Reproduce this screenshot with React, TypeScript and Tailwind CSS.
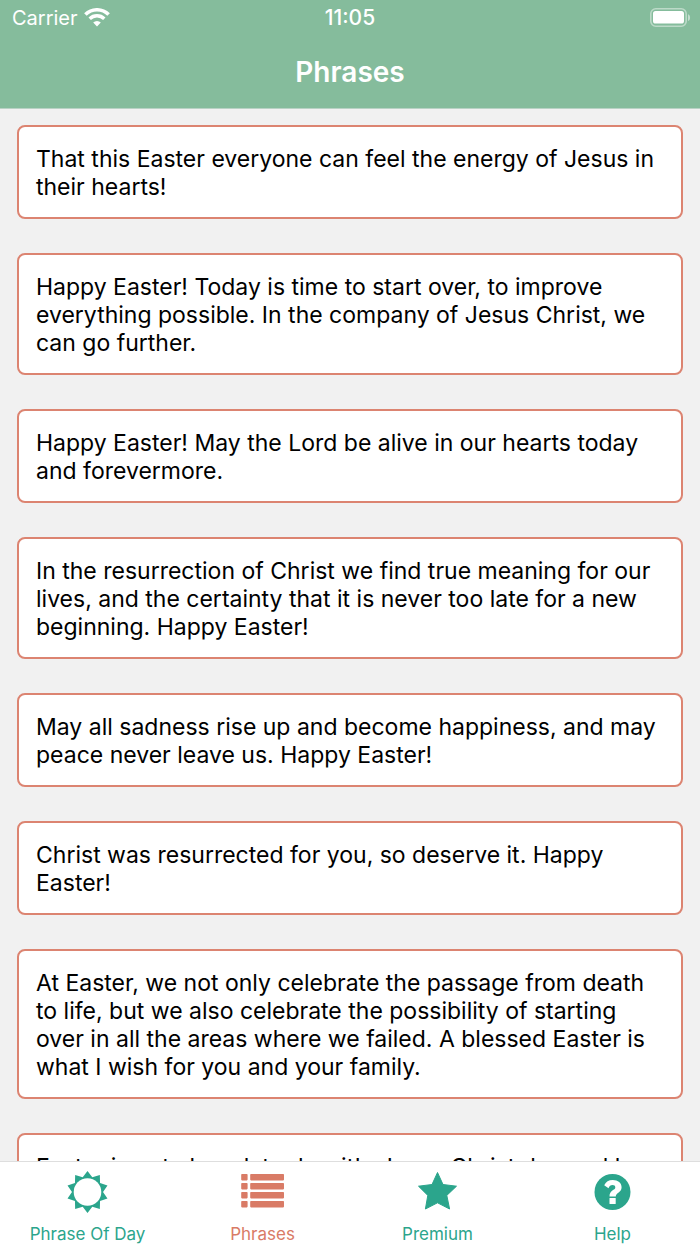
// Phrases screen: list of Easter phrases with the bottom tab bar
import type { ReactNode } from 'react'

const phrases = [
  'That this Easter everyone can feel the energy of Jesus in their hearts!',
  'Happy Easter! Today is time to start over, to improve everything possible. In the company of Jesus Christ, we can go further.',
  'Happy Easter! May the Lord be alive in our hearts today and forevermore.',
  'In the resurrection of Christ we find true meaning for our lives, and the certainty that it is never too late for a new beginning. Happy Easter!',
  'May all sadness rise up and become happiness, and may peace never leave us. Happy Easter!',
  'Christ was resurrected for you, so deserve it. Happy Easter!',
  'At Easter, we not only celebrate the passage from death to life, but we also celebrate the possibility of starting over in all the areas where we failed. A blessed Easter is what I wish for you and your family.',
  "Easter is not chocolate day, it's Jesus Christ day and he resurrected for us.",
]

// 10 pointed sun outline
const sunPoints = Array.from({ length: 20 }, (_, i) => {
  const r = i % 2 === 0 ? 21 : 15.5
  const a = (i * Math.PI) / 10
  return `${(21.5 + r * Math.sin(a)).toFixed(2)},${(22 - r * Math.cos(a)).toFixed(2)}`
}).join(' ')

function SunIcon() {
  return (
    <svg viewBox="0 0 44 44" className="size-11" fill="currentColor" aria-hidden="true">
      <polygon points={sunPoints} />
      <circle cx="21.5" cy="22" r="13.8" fill="#fff" />
    </svg>
  )
}

function ListIcon() {
  return (
    <svg viewBox="0 0 44 44" className="size-11" fill="currentColor" aria-hidden="true">
      {[4, 13, 22, 31].map((y) => (
        <g key={y}>
          <rect x="0.2" y={y} width="6.4" height="6.4" rx="0.8" />
          <rect x="9.2" y={y} width="33.8" height="6.4" rx="0.8" />
        </g>
      ))}
    </svg>
  )
}

function StarIcon() {
  return (
    <svg viewBox="0 0 44 44" className="size-11" fill="currentColor" stroke="currentColor" strokeLinejoin="round" aria-hidden="true">
      <path d="M21.5 2.5 27 14.5 40.5 16.2 30.8 25.4 33.6 39 21.5 32.8 9.4 39 11.8 25.4 2.5 16.2 16 14.5Z" />
    </svg>
  )
}

function HelpIcon() {
  return (
    <svg viewBox="0 0 44 44" className="size-11" aria-hidden="true">
      <circle cx="21.5" cy="22" r="18" fill="currentColor" />
      <path
        d="M13.2 15.2C15 11.8 17.5 10 21.8 10c5.2 0 8.8 3 8.8 7.2 0 5.6-5.8 5.4-5.8 9.2h-6.3c0-6.8 5.8-6 5.8-9 0-1.6-1.1-2.4-2.8-2.4-2 0-3.1 1.2-4 3.2Z"
        fill="#fff"
      />
      <rect x="18.5" y="28" width="6.2" height="6" rx="0.6" fill="#fff" />
    </svg>
  )
}

function WifiIcon() {
  return (
    <svg viewBox="0 0 26 20" className="h-5 w-[26px]" fill="none" stroke="#fff" aria-label="Wi-Fi">
      <path d="M1.4 6.6a16.4 16.4 0 0 1 23.2 0" strokeWidth="3.6" />
      <path d="M5.7 10.8a10.4 10.4 0 0 1 14.6 0" strokeWidth="3.4" />
      <path d="M13 18.4 9.2 14.6a5.4 5.4 0 0 1 7.6 0Z" fill="#fff" stroke="none" />
    </svg>
  )
}

function BatteryIcon() {
  return (
    <svg viewBox="0 0 42 20" className="h-5 w-[42px]" aria-label="Battery">
      <rect x="0.8" y="0.8" width="35.4" height="17.4" rx="5" fill="none" stroke="#fff" strokeOpacity="0.45" strokeWidth="1.6" />
      <rect x="3" y="3" width="31" height="12.6" rx="2.6" fill="#fff" />
      <path d="M38 6.2c2.8 1 2.8 5.8 0 6.8Z" fill="#fff" fillOpacity="0.5" />
    </svg>
  )
}

interface TabProps {
  label: string
  icon: ReactNode
  active?: boolean
}

function Tab({ label, icon, active = false }: TabProps) {
  return (
    <button
      type="button"
      aria-current={active ? 'page' : undefined}
      className={`flex flex-col items-center pt-2 ${active ? 'text-[#d97b66]' : 'text-[#2ba58c]'}`}
    >
      {icon}
      <span className="mt-2 text-[17px] leading-6">{label}</span>
    </button>
  )
}

export default function App() {
  return (
    <div className="flex h-screen flex-col bg-[#f1f1f1] font-['Inter','Liberation_Sans',sans-serif]">
      <header className="shrink-0 border-b border-[#b9d2c5] bg-[#85bc9c] text-white">
        {/* Status bar */}
        <div className="grid h-9 grid-cols-3 items-center px-3 text-[20px] leading-6">
          <div className="flex items-center gap-1.5">
            <span>Carrier</span>
            <WifiIcon />
          </div>
          <span className="text-center text-[21px] font-medium">11:05</span>
          <div className="-mr-1 flex justify-end">
            <BatteryIcon />
          </div>
        </div>
        <h1 className="h-18 pt-5 text-center text-[28px] leading-8 font-semibold">Phrases</h1>
      </header>

      {/* Phrase list, cut off by the tab bar */}
      <main className="min-h-0 flex-1 overflow-hidden px-[17px] pt-4">
        <ul className="flex flex-col gap-[34px]">
          {phrases.map((phrase) => (
            <li
              key={phrase}
              className="rounded-lg border-2 border-[#dc8471] bg-white px-[17px] pt-[18px] pb-4 text-[23px] leading-7 text-black"
            >
              {phrase}
            </li>
          ))}
        </ul>
      </main>

      <nav className="grid h-[83px] shrink-0 grid-cols-4 border-t border-[#dedede] bg-white">
        <Tab label="Phrase Of Day" icon={<SunIcon />} />
        <Tab label="Phrases" icon={<ListIcon />} active />
        <Tab label="Premium" icon={<StarIcon />} />
        <Tab label="Help" icon={<HelpIcon />} />
      </nav>
    </div>
  )
}
